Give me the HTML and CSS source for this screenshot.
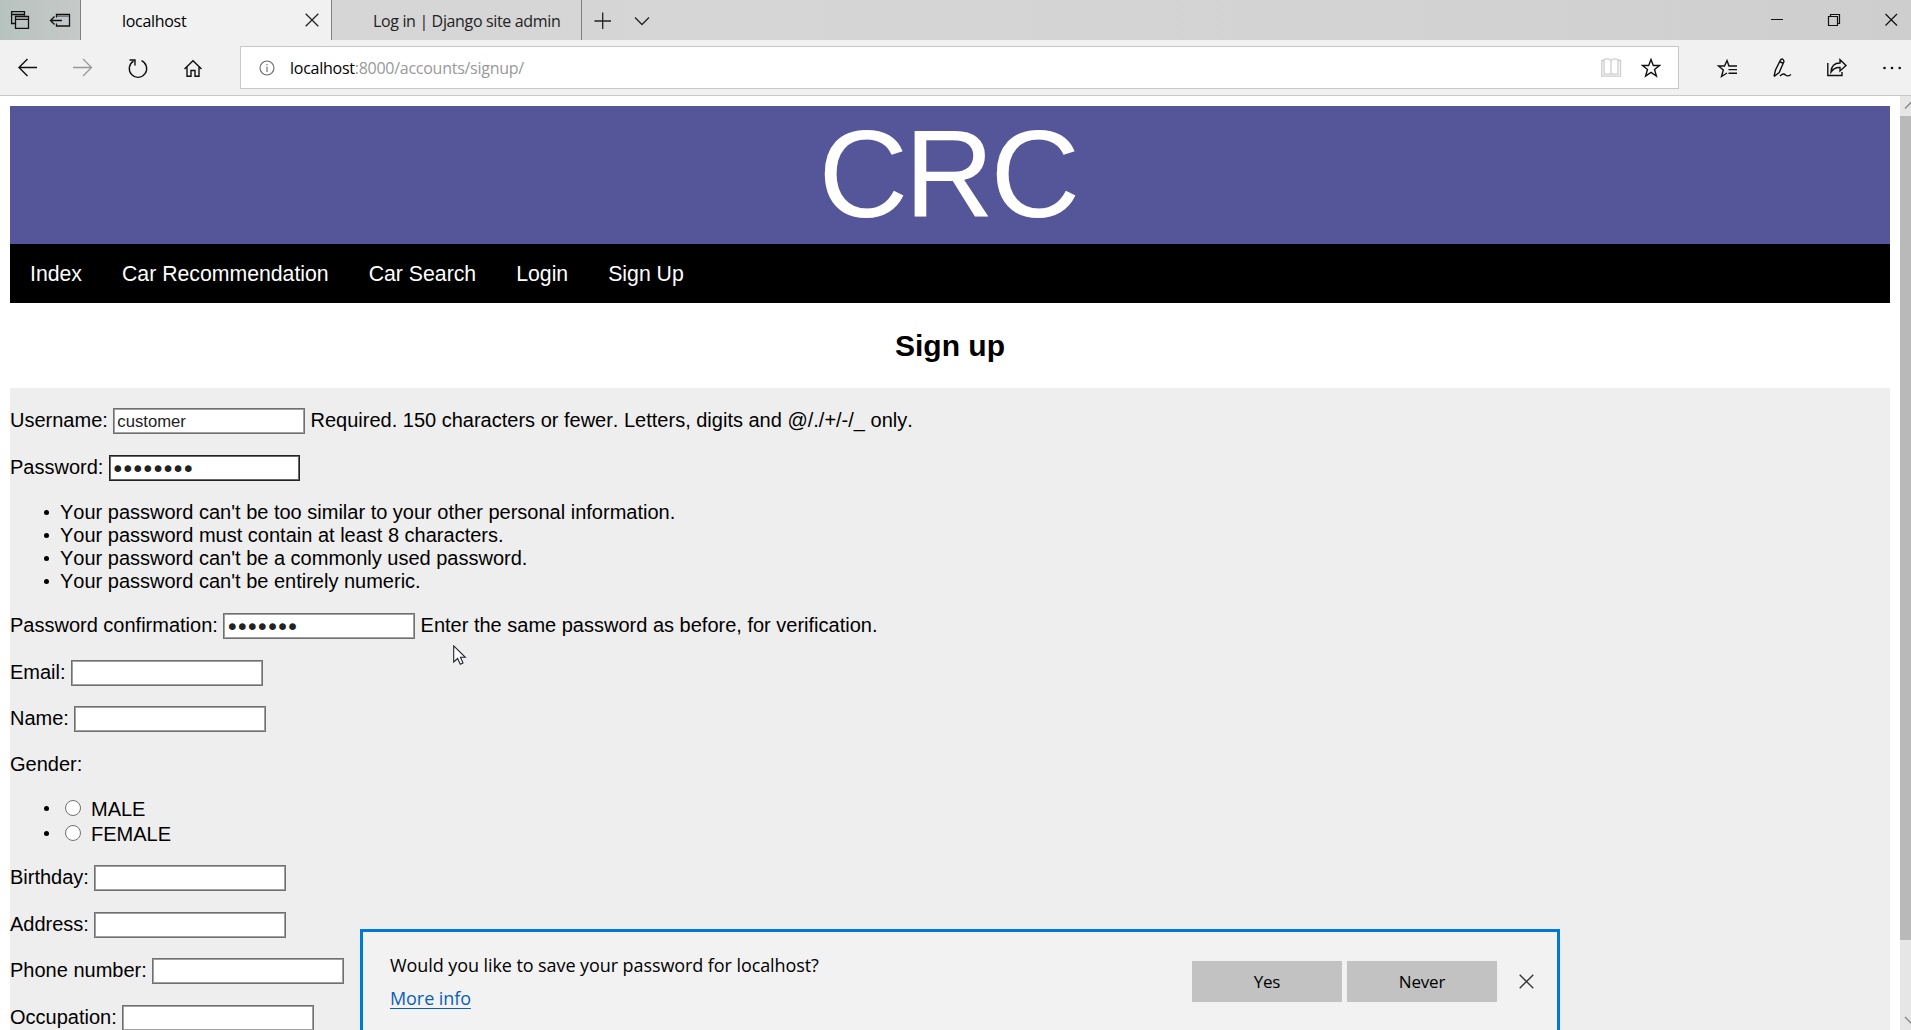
FILE: index.html
```html
<!DOCTYPE html>
<html lang="en">
<head>
<meta charset="utf-8">
<title>localhost</title>
<link rel="stylesheet" href="styles.css">
</head>
<body>
<div class="browser">
  <div class="tabstrip">
    <div class="tab-tools">
      <svg width="80" height="40" viewBox="0 0 80 40" fill="none" stroke="#111" stroke-width="1.3"><path d="M15 23.500H11.600V11.700H24.500V15.500M11.600 14.500H24.500M15.500 28.300V16.500H28.500V28.300ZM15.500 19.300H28.500"/><path d="M56.500 17.500V14.500H69.500V26H56.500V23.500M50.500 20.500H62M54.500 16.500L50.500 20.500L54.500 24.500"/><path stroke="#667" d="M57 16.200H69"/></svg>
    </div>
    <div class="tab tab-active">
      <span class="tab-title">localhost</span>
      <svg width="14" height="14" viewBox="0 0 14 14" fill="none" stroke="#222" stroke-width="1.3"><path d="M.7.7L13.3 13.3M13.3.7L.7 13.3"/></svg>
    </div>
    <div class="tab tab-idle"><span class="tab-title wide">Log in | Django site admin</span></div>
    <svg class="tab-actions" width="80" height="40" viewBox="0 0 80 40" fill="none" stroke="#222" stroke-width="1.3"><path d="M12.500 21H29M20.700 12.500V29M53 17.500L60 24.500L67 17.500"/></svg>
    <svg class="window-buttons" width="151" height="40" viewBox="0 0 151 40" fill="none" stroke="#111" stroke-width="1.2"><path d="M11 19.500H23M68.500 16.500H77.500V25.500H68.500ZM70.500 16.500V14.500H79.500V23.500H77.500M125.500 14L137 25.500M137 14L125.500 25.500"/></svg>
  </div>
  <div class="toolbar">
    <svg class="nav-icons" width="240" height="55" viewBox="0 40 240 55" fill="none" stroke="#111" stroke-width="1.4"><path d="M37 67.500H19M27.500 59L19 67.500L27.500 76"/><path stroke="#999" stroke-width="1.300" d="M73 67.500H91.500M83 59L91.500 67.500L83 76"/><path d="M133.500 61.200A8.700 8.700 0 1 0 141.500 60.700M129.500 60H135V65.500"/><path d="M184.500 69L193 60.700L201.500 69M187 67V76.300H191V70.500H195V76.300H199V67"/></svg>
    <div class="address">
      <svg width="16" height="16" viewBox="0 0 16 16" fill="none" stroke="#666" stroke-width="1.100"><circle cx="8" cy="8" r="7"/><path d="M8 6.700V12M8 4V5.300"/></svg>
      <span class="url"><b>localhost</b>:8000/accounts/signup/</span>
      <svg class="page-icons" width="60" height="22" viewBox="1601 57 60 22" fill="none" stroke="#111" stroke-width="1.400"><path stroke="#ccc" stroke-width="1.300" d="M1604 60.500H1601.800V76.200H1620.500V60.500H1618M1604 59.500Q1609 58 1611 60.500Q1613 58 1618 59.500V74.200H1604ZM1611 60.500V74.200"/><path d="M1651 59.500L1653.300 65.500H1659.500L1654.500 69.500L1656.400 76L1651 72.300L1645.600 76L1647.500 69.500L1642.500 65.500H1648.700Z"/></svg>
    </div>
    <svg class="tool-icons" width="231" height="55" viewBox="1680 40 231 55" fill="none" stroke="#111" stroke-width="1.400"><path d="M1737 66H1729L1727 60.500L1724.500 66H1718.500L1723.300 70L1721.500 76.500L1727 73M1728.500 69.600H1737M1728.500 73.300H1737"/><path d="M1774 76.500L1775.500 70L1780.500 60Q1783 57.500 1784 61.500L1779.200 72.500L1774 76.500M1779.500 61.500L1783.500 63.500M1780 76Q1783.500 72.500 1785.500 75Q1787.500 77 1791 74.500"/><path d="M1827.800 63V75.500H1842V72M1831 72Q1831.500 63 1840 63V59.700L1846 65.500L1840 71V67.500Q1834.500 67 1831 72Z"/><g fill="#111" stroke="none"><circle cx="1884.500" cy="68" r="1.300"/><circle cx="1892" cy="68" r="1.300"/><circle cx="1899.700" cy="68" r="1.300"/></g></svg>
  </div>
  <div class="viewport">
    <main class="page">
      <header class="banner">CRC</header>
      <nav class="menu"><a>Index</a><a>Car Recommendation</a><a>Car Search</a><a>Login</a><a>Sign Up</a></nav>
      <h3 class="title">Sign up</h3>
      <form class="form">
        <div class="row"><label>Username:</label><input class="field" type="text" value="customer"><span>Required. 150 characters or fewer. Letters, digits and @/./+/-/_ only.</span></div>
        <div class="row"><label>Password:</label><input class="field secret focused" type="password" value="customer"></div>
        <ul class="list rules">
          <li>Your password can't be too similar to your other personal information.</li>
          <li>Your password must contain at least 8 characters.</li>
          <li>Your password can't be a commonly used password.</li>
          <li>Your password can't be entirely numeric.</li>
        </ul>
        <div class="row"><label>Password confirmation:</label><input class="field secret" type="password" value="custome"><span>Enter the same password as before, for verification.</span></div>
        <div class="row"><label>Email:</label><input class="field" type="text"></div>
        <div class="row"><label>Name:</label><input class="field" type="text"></div>
        <div class="row row-plain"><label>Gender:</label></div>
        <ul class="list choices">
          <li><label><input class="radio" type="radio" name="gender">MALE</label></li>
          <li><label><input class="radio" type="radio" name="gender">FEMALE</label></li>
        </ul>
        <div class="row"><label>Birthday:</label><input class="field" type="text"></div>
        <div class="row"><label>Address:</label><input class="field" type="text"></div>
        <div class="row"><label>Phone number:</label><input class="field" type="text"></div>
        <div class="row"><label>Occupation:</label><input class="field" type="text"></div>
      </form>
    </main>
    <div class="scrollbar">
      <svg width="11" height="20" viewBox="0 0 11 20" fill="none" stroke="#888" stroke-width="1.500"><path d="M5 12.500L12 5.500"/></svg>
      <div class="thumb"></div>
      <svg width="11" height="20" viewBox="0 0 11 20" fill="none" stroke="#888" stroke-width="1.500"><path d="M5 7L12 14"/></svg>
    </div>
  </div>
  <div class="prompt">
    <div class="prompt-text"><span class="question">Would you like to save your password for localhost?</span><a class="more">More info</a></div>
    <div class="button">Yes</div>
    <div class="button">Never</div>
    <svg class="dismiss" width="15" height="15" viewBox="0 0 15 15" fill="none" stroke="#333" stroke-width="1.300"><path d="M.7.7L14.300 14.300M14.300.7L.7 14.300"/></svg>
  </div>
  <svg class="pointer" width="14" height="21" viewBox="0 0 14 21" fill="#fff" stroke="#223" stroke-width="1.100"><path d="M.7.9V17L4.600 13.500L7.300 19.300L10 18L7.500 12.300H12.300Z"/></svg>
</div>
</body>
</html>
```
FILE: styles.css
```css
* { box-sizing: border-box; }
body { margin: 0; overflow: hidden; background: #fff; }
svg { display: block; flex: none; }

.browser {
  position: relative;
  display: flex;
  flex-direction: column;
  width: 1911px;
  height: 1030px;
  overflow: hidden;
  font-family: "Open Sans", "Noto Sans", sans-serif;
}

.tabstrip {
  display: flex;
  flex: none;
  height: 40px;
  background: linear-gradient(90deg, #b7c3be 0, #c6c9c8 80px, #d3d3d3 330px, #d6d6d6 700px, #d2d2d2 1500px, #cecece 100%);
}
.tab-tools { width: 80px; }
.tab {
  display: flex;
  align-items: center;
  border-left: 1px solid #808080;
  font-size: 16px;
  color: #222;
}
.tab-active { width: 251px; padding: 0 12px 0 41px; justify-content: space-between; background: #f1f1f1; color: #000; }
.tab-idle { width: 251px; padding-left: 41px; border-right: 1px solid #808080; background: #d6d6d6; }
.tab-title { padding-top: 1px; letter-spacing: -0.3px; white-space: nowrap; }
.wide { letter-spacing: -0.35px; }
.window-buttons { margin-left: auto; }

.toolbar {
  display: flex;
  flex: none;
  height: 56px;
  border-bottom: 1px solid #c8c8c8;
  background: #f1f1f1;
}
.address {
  display: flex;
  align-items: center;
  width: 1439px;
  height: 43px;
  margin-top: 6px;
  padding: 0 17px 0 18px;
  border: 1px solid #c8c8c8;
  background: #fff;
}
.url { margin-left: 15px; padding-top: 1px; font-size: 16px; letter-spacing: -0.26px; color: #999; }
.url b { font-weight: 400; color: #000; }
.page-icons { margin-left: auto; }
.tool-icons { margin-left: 1px; }

.viewport { display: flex; flex: 1; min-height: 0; }
.page {
  width: 1900px;
  padding: 10px 10px 0;
  overflow: hidden;
  font-family: "Liberation Sans", Arial, sans-serif;
  font-size: 20px;
  line-height: 23px;
  font-kerning: none;
  color: #000;
}
.banner { height: 138px; padding-right: 5px; background: #555599; color: #fff; font-size: 124px; letter-spacing: -3.500px; line-height: 136px; text-align: center; }
.menu { display: flex; gap: 40px; height: 59px; padding: 1px 20px 0; background: #000; color: #fff; font-size: 21.25px; line-height: 59px; }
.title { margin: 25px 0; font-size: 30px; line-height: 35px; text-align: center; }
.form { padding-top: 20px; background: #eee; }

.row { display: flex; gap: 5.56px; height: 26.5px; margin-bottom: 20px; padding-top: 1px; white-space: nowrap; }
.row-plain { height: 23px; padding-top: 0; }
.field {
  width: 191.6px;
  height: 26px;
  margin: -1px 0 0;
  padding: 1px 3px 0;
  border: 1px solid #707070;
  border-radius: 0;
  outline: 0;
  box-shadow: inset 0 0 0 1px #a0a0a0;
  background: #fff;
  color: #222;
  font: 16.67px "Liberation Sans", Arial, sans-serif;
}
.secret { padding: 2px 1px 0; font: 23px/22px "DejaVu Sans", sans-serif; letter-spacing: -3.500px; }
.focused { width: 191px; border-color: #222; box-shadow: inset 0 0 0 1px #666; }

.list { margin: 0 0 20px; padding-left: 50px; list-style: none; }
.rules { margin-bottom: 20.3px; }
.list li { display: flex; align-items: center; }
.list li::before { content: ""; width: 5px; height: 5px; margin: 0 11px 0 -16px; border-radius: 50%; background: #000; }
.choices { height: 49.4px; }
.choices li { height: 25px; }
.choices label { display: flex; align-items: center; padding-top: 2px; }
.radio { appearance: none; width: 16px; height: 16px; margin: -3px 10px 0 5px; border: 1px solid #707070; border-radius: 50%; background: #fff; }

.scrollbar { display: flex; flex-direction: column; justify-content: space-between; width: 11px; background: #e6e6e6; }
.thumb { height: 824px; margin-bottom: auto; background: #b9b9b9; }

.prompt {
  position: absolute;
  left: 360px;
  top: 929px;
  display: flex;
  width: 1200px;
  height: 110px;
  padding: 29px 23px 0 27px;
  border: 3px solid #0078d7;
  background: #f2f2f2;
  color: #000;
}
.prompt-text { display: flex; flex-direction: column; align-items: flex-start; width: 802px; font-size: 18px; letter-spacing: -0.08px; line-height: 33px; margin-top: -12px; }
.more { color: #0a5fb8; text-decoration: underline; text-decoration-thickness: 1px; text-underline-offset: 3px; }
.button { width: 150px; height: 41px; margin-right: 5px; background: #c2c2c2; font-size: 17px; letter-spacing: -0.2px; line-height: 42px; text-align: center; }
.dismiss { margin: 13px 0 0 17px; }
.pointer { position: absolute; left: 453px; top: 645px; }
```
